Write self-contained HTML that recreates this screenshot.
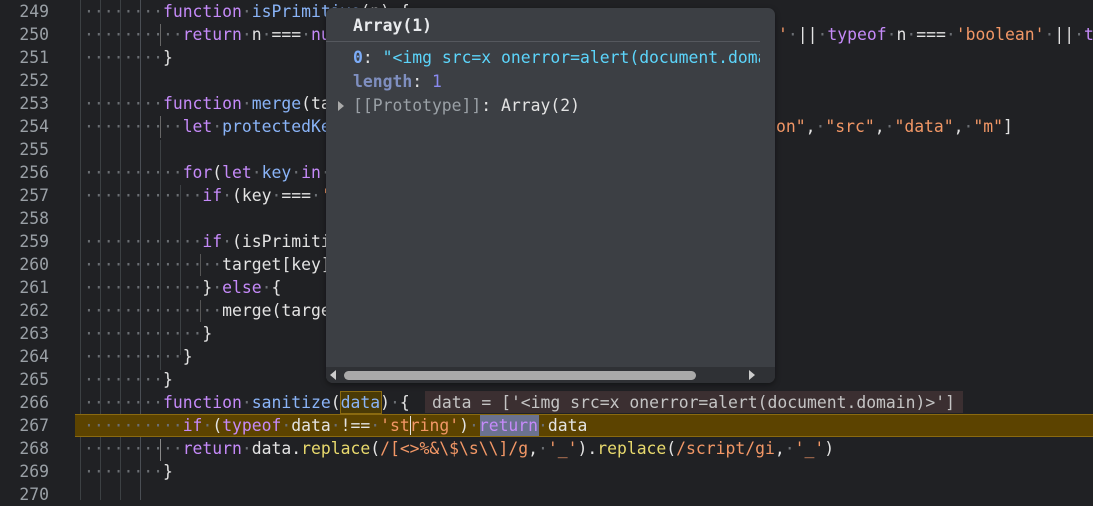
<!DOCTYPE html>
<html><head><meta charset="utf-8"><style>
html,body{margin:0;padding:0;}
body{width:1093px;height:500px;overflow:hidden;background:#202124;font-family:"DejaVu Sans Mono","Liberation Mono",monospace;font-size:16.4px;color:#e3e3e3;position:relative;}
.ln{position:absolute;left:0;width:49px;text-align:right;color:#9aa0a6;height:23px;line-height:23px;}
.c{position:absolute;left:84px;white-space:pre;height:23px;line-height:23px;}
.d{color:#6b6f74}
.k{color:#c58af9}
.f{color:#8ab4f8}
.s{color:#f29766}
.y{color:#e8d96d}
.g{position:absolute;width:1px;background:#3c4043;}
</style></head><body>
<div class="g" style="left:80px;top:0;height:500px"></div>
<div class="g" style="left:100px;top:0;height:500px"></div>
<div class="g" style="left:120px;top:0;height:500px"></div>
<div class="g" style="left:140px;top:0;height:500px;background:#4a4e54"></div>
<div class="g" style="left:160px;top:140px;height:230px"></div>
<div class="g" style="left:180px;top:185px;height:170px"></div>
<div class="g" style="left:160px;top:24px;height:22px;background:#666"></div>
<div class="g" style="left:160px;top:116px;height:22px;background:#666"></div>
<div class="g" style="left:200px;top:254px;height:22px;background:#555"></div>
<div class="g" style="left:200px;top:300px;height:22px;background:#555"></div>
<div class="g" style="left:160px;top:439px;height:22px;background:#888"></div>

<div style="position:absolute;left:75px;top:414px;width:1020px;height:21px;background:#5c4300;border-top:1px solid #8a6a10;border-bottom:1px solid #8a6a10"></div>
<div style="position:absolute;left:480px;top:415px;width:59px;height:21px;background:#6b7290"></div>
<div style="position:absolute;left:340px;top:391px;width:40px;height:21px;background:#4a3a06;border:1px solid #8a6a10"></div>
<div style="position:absolute;left:425px;top:391px;width:538px;height:22px;background:#3b2f31"></div>
<div class="c" style="left:432px;top:391px;color:#c4c4c4">data = ['&lt;img src=x onerror=alert(document.domain)&gt;']</div>

<div class="ln" style="top:0">249</div>
<div class="ln" style="top:23px">250</div>
<div class="ln" style="top:46px">251</div>
<div class="ln" style="top:69px">252</div>
<div class="ln" style="top:92px">253</div>
<div class="ln" style="top:115px">254</div>
<div class="ln" style="top:138px">255</div>
<div class="ln" style="top:161px">256</div>
<div class="ln" style="top:184px">257</div>
<div class="ln" style="top:207px">258</div>
<div class="ln" style="top:230px">259</div>
<div class="ln" style="top:253px">260</div>
<div class="ln" style="top:276px">261</div>
<div class="ln" style="top:299px">262</div>
<div class="ln" style="top:322px">263</div>
<div class="ln" style="top:345px">264</div>
<div class="ln" style="top:368px">265</div>
<div class="ln" style="top:391px">266</div>
<div class="ln" style="top:414px">267</div>
<div class="ln" style="top:437px">268</div>
<div class="ln" style="top:460px">269</div>
<div class="ln" style="top:483px">270</div>

<div class="c" style="top:0"><span class="d">········</span><span class="k">function</span><span class="d">·</span><span class="f">isPrimitive</span>(n)<span class="d">·</span>{</div>
<div class="c" style="top:23px"><span class="d">··········</span><span class="k">return</span><span class="d">·</span>n<span class="d">·</span>===<span class="d">·</span><span class="k">null</span></div>
<div class="c" style="top:23px;left:778px"><span class="s">'</span><span class="d">·</span>||<span class="d">·</span><span class="k">typeof</span><span class="d">·</span>n<span class="d">·</span>===<span class="d">·</span><span class="s">'boolean'</span><span class="d">·</span>||<span class="d">·</span><span class="k">typeof</span></div>
<div class="c" style="top:46px"><span class="d">········</span>}</div>
<div class="c" style="top:92px"><span class="d">········</span><span class="k">function</span><span class="d">·</span><span class="f">merge</span>(target,<span class="d">·</span>source)<span class="d">·</span>{</div>
<div class="c" style="top:115px"><span class="d">··········</span><span class="k">let</span><span class="d">·</span><span class="f">protectedKeys</span><span class="d">·</span>=<span class="d">·</span>[]</div>
<div class="c" style="top:115px;left:776px"><span class="s">on"</span>,<span class="d">·</span><span class="s">"src"</span>,<span class="d">·</span><span class="s">"data"</span>,<span class="d">·</span><span class="s">"m"</span>]</div>
<div class="c" style="top:161px"><span class="d">··········</span><span class="k">for</span>(<span class="k">let</span><span class="d">·</span><span class="f">key</span><span class="d">·</span><span class="k">in</span><span class="d">·</span>source)</div>
<div class="c" style="top:184px"><span class="d">············</span><span class="k">if</span><span class="d">·</span>(key<span class="d">·</span>===<span class="d">·</span><span class="s">'</span></div>
<div class="c" style="top:230px"><span class="d">············</span><span class="k">if</span><span class="d">·</span>(isPrimitive</div>
<div class="c" style="top:253px"><span class="d">··············</span>target[key]</div>
<div class="c" style="top:276px"><span class="d">············</span>}<span class="d">·</span><span class="k">else</span><span class="d">·</span>{</div>
<div class="c" style="top:299px"><span class="d">··············</span>merge(target</div>
<div class="c" style="top:322px"><span class="d">············</span>}</div>
<div class="c" style="top:345px"><span class="d">··········</span>}</div>
<div class="c" style="top:368px"><span class="d">········</span>}</div>
<div class="c" style="top:391px"><span class="d">········</span><span class="k">function</span><span class="d">·</span><span class="f">sanitize</span>(<span class="f">data</span>)<span class="d">·</span>{</div>
<div class="c" style="top:414px"><span class="d">··········</span><span class="k">if</span><span class="d">·</span>(<span class="k">typeof</span><span class="d">·</span>data<span class="d">·</span>!==<span class="d">·</span><span class="s">'string'</span>)<span class="d">·</span><span class="k">return</span><span class="d">·</span>data</div>
<div style="position:absolute;left:410px;top:416px;width:1px;height:19px;background:#e3e3e3"></div>
<div class="c" style="top:437px"><span class="d">··········</span><span class="k">return</span><span class="d">·</span>data.<span class="y">replace</span>(<span class="s">/[&lt;&gt;%&amp;\$\s\\]/g</span>,<span class="d">·</span><span class="s">'_'</span>).<span class="y">replace</span>(<span class="s">/script/gi</span>,<span class="d">·</span><span class="s">'_'</span>)</div>
<div class="c" style="top:460px"><span class="d">········</span>}</div>

<div style="position:absolute;left:326px;top:8px;width:449px;height:375px;background:#3c3f44;border-radius:7px;overflow:hidden;box-shadow:0 2px 6px rgba(0,0,0,.4)">
  <div style="position:absolute;left:27px;top:7px;font-weight:bold;color:#e8eaed;line-height:22px">Array(1)</div>
  <div style="position:absolute;left:0;top:33px;width:434px;height:1px;background:#55585e"></div>
  <div style="position:absolute;left:27px;top:39px;width:407px;overflow:hidden;white-space:pre;line-height:22px;color:#e3e3e3"><span style="color:#7cacf8;font-weight:bold">0</span>: <span style="color:#5cd5fb">"&lt;img src=x onerror=alert(document.domain)&gt;"</span></div>
  <div style="position:absolute;left:27px;top:63px;white-space:pre;line-height:22px;color:#e3e3e3"><span style="color:#7f8fc0;font-weight:bold">length</span>: <span style="color:#8a8af0">1</span></div>
  <div style="position:absolute;left:12px;top:93px;width:0;height:0;border-left:6px solid #aaa;border-top:5px solid transparent;border-bottom:5px solid transparent"></div>
  <div style="position:absolute;left:27px;top:87px;white-space:pre;line-height:22px;color:#e3e3e3"><span style="color:#9aa0a6">[[Prototype]]</span>: Array(2)</div>
  <div style="position:absolute;left:0;top:359px;width:449px;height:16px;background:#2f3135"></div>
  <div style="position:absolute;left:18px;top:363px;width:352px;height:9px;background:#a9a9a9;border-radius:5px"></div>
  <div style="position:absolute;left:4px;top:362px;width:0;height:0;border-right:6px solid #ccc;border-top:5px solid transparent;border-bottom:5px solid transparent"></div>
  <div style="position:absolute;left:423px;top:362px;width:0;height:0;border-left:6px solid #ccc;border-top:5px solid transparent;border-bottom:5px solid transparent"></div>
</div>
</body></html>
